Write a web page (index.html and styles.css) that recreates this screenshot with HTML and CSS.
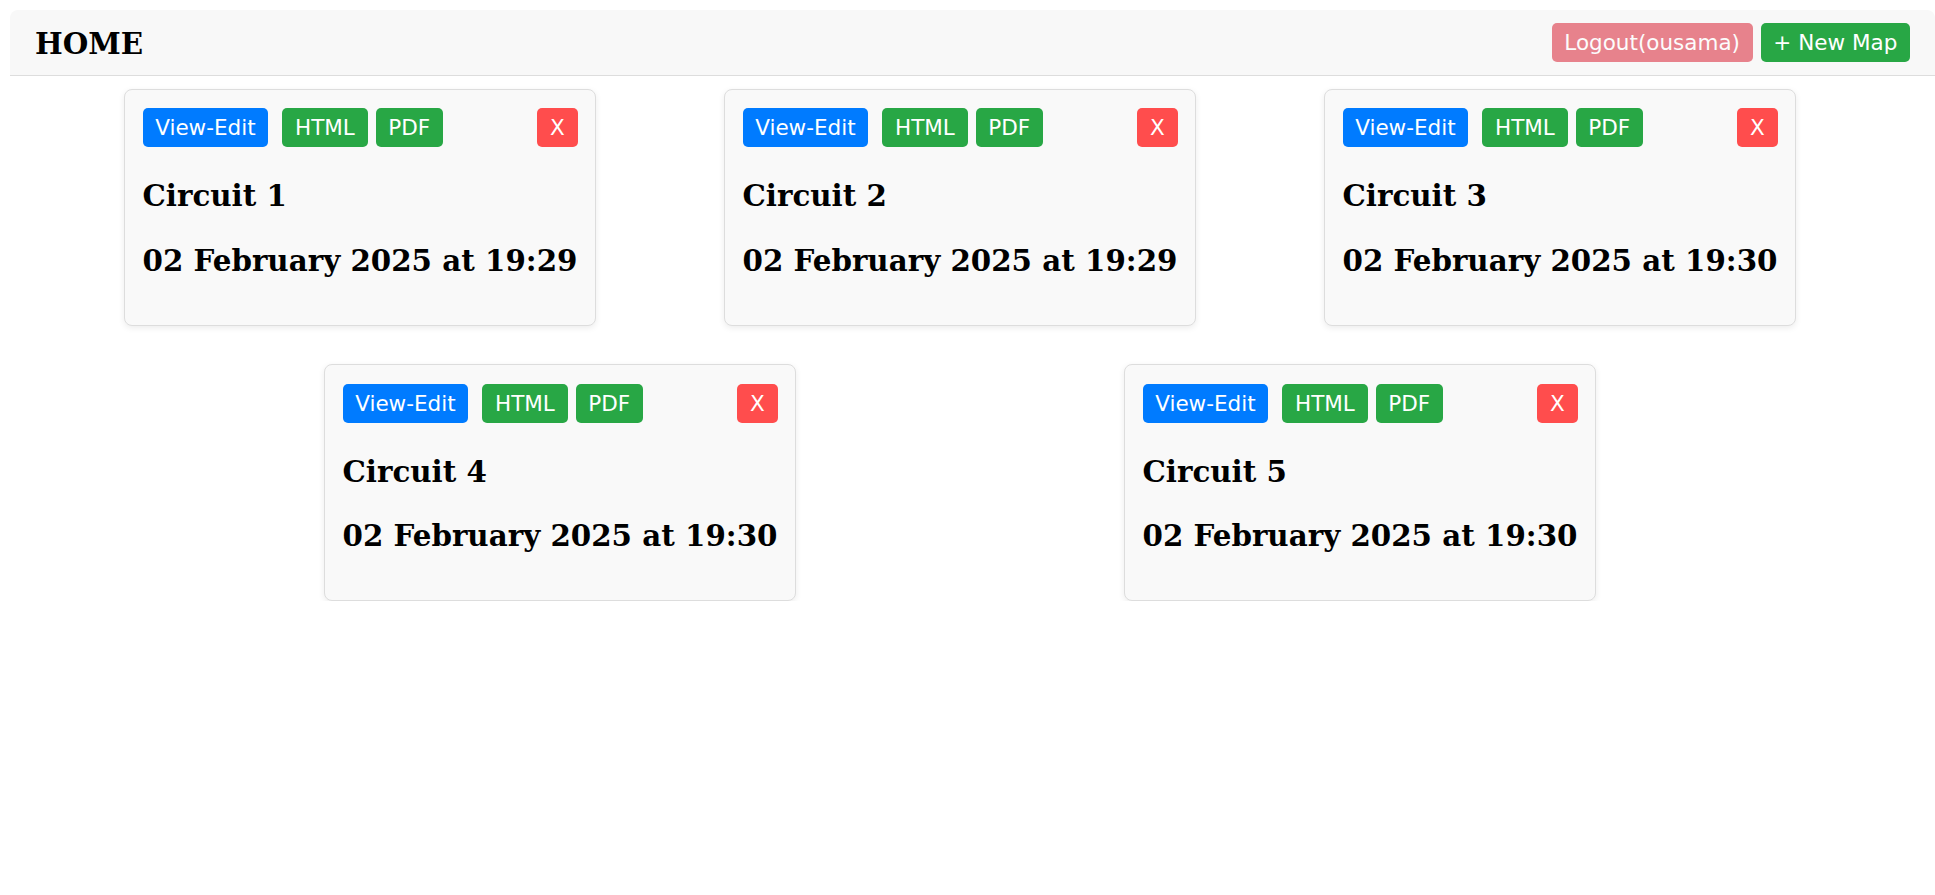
FILE: index.html
```html
<!DOCTYPE html>
<html lang="en">
<head>
<meta charset="utf-8">
<title>HOME</title>
<link rel="stylesheet" href="styles.css">
</head>
<body>
<header class="topbar">
  <h1 class="brand">HOME</h1>
  <div class="top-actions">
    <button class="btn btn-logout">Logout(ousama)</button>
    <button class="btn btn-green">+ New Map</button>
  </div>
</header>
<main class="cards">
  <div class="card">
    <div class="card-actions">
      <button class="btn btn-blue">View-Edit</button>
      <button class="btn btn-green btn-html">HTML</button>
      <button class="btn btn-green">PDF</button>
      <button class="btn btn-red btn-x">X</button>
    </div>
    <h2 class="card-title">Circuit 1</h2>
    <h2 class="card-date">02 February 2025 at 19:29</h2>
  </div>
  <div class="card">
    <div class="card-actions">
      <button class="btn btn-blue">View-Edit</button>
      <button class="btn btn-green btn-html">HTML</button>
      <button class="btn btn-green">PDF</button>
      <button class="btn btn-red btn-x">X</button>
    </div>
    <h2 class="card-title">Circuit 2</h2>
    <h2 class="card-date">02 February 2025 at 19:29</h2>
  </div>
  <div class="card">
    <div class="card-actions">
      <button class="btn btn-blue">View-Edit</button>
      <button class="btn btn-green btn-html">HTML</button>
      <button class="btn btn-green">PDF</button>
      <button class="btn btn-red btn-x">X</button>
    </div>
    <h2 class="card-title">Circuit 3</h2>
    <h2 class="card-date">02 February 2025 at 19:30</h2>
  </div>
  <div class="card">
    <div class="card-actions">
      <button class="btn btn-blue">View-Edit</button>
      <button class="btn btn-green btn-html">HTML</button>
      <button class="btn btn-green">PDF</button>
      <button class="btn btn-red btn-x">X</button>
    </div>
    <h2 class="card-title">Circuit 4</h2>
    <h2 class="card-date">02 February 2025 at 19:30</h2>
  </div>
  <div class="card">
    <div class="card-actions">
      <button class="btn btn-blue">View-Edit</button>
      <button class="btn btn-green btn-html">HTML</button>
      <button class="btn btn-green">PDF</button>
      <button class="btn btn-red btn-x">X</button>
    </div>
    <h2 class="card-title">Circuit 5</h2>
    <h2 class="card-date">02 February 2025 at 19:30</h2>
  </div>
</main>
</body>
</html>
```
FILE: styles.css
```css
* {
  box-sizing: border-box;
}

body {
  margin: 0;
  background: #ffffff;
  color: #000000;
  font-family: "DejaVu Serif", serif;
}

.topbar {
  margin: 10px 0 0 10px;
  height: 66px;
  padding: 0 25px 0 25px;
  background: #f8f8f8;
  border-bottom: 1px solid #dddddd;
  border-radius: 8px 8px 0 0;
  display: flex;
  align-items: center;
  justify-content: space-between;
}

.brand {
  margin: 0;
  padding-top: 2.6px;
  font-size: 29.33px;
  font-weight: bold;
  line-height: normal;
}

.top-actions {
  display: flex;
  gap: 8px;
}

.btn {
  font-family: "DejaVu Sans", sans-serif;
  font-size: 21.5px;
  line-height: normal;
  padding: 7.2px 12.7px;
  border: none;
  border-radius: 5px;
  color: #ffffff;
  cursor: pointer;
  white-space: nowrap;
}

.btn-blue {
  background: #007bff;
}

.btn-green {
  background: #28a745;
}

.btn-red {
  background: #ff4d4d;
}

.btn-logout {
  background: #dc3545;
  opacity: 0.6;
}

.cards {
  display: flex;
  flex-wrap: wrap;
  justify-content: space-evenly;
  row-gap: 38.7px;
  padding: 12.7px 21px 0 6px;
}

.card {
  width: 472px;
  margin: 0 10px;
  padding: 18.3px 17.5px 18px 17.5px;
  background: #f9f9f9;
  border: 1px solid #dddddd;
  border-radius: 8px;
  box-shadow: 0 2px 6px rgba(0, 0, 0, 0.08);
}

.card-actions {
  display: flex;
  align-items: center;
  gap: 8px;
}

.btn-html {
  margin-left: 6px;
}

.btn-x {
  margin-left: auto;
}

.card-title,
.card-date {
  font-size: 29.33px;
  font-weight: bold;
  line-height: normal;
  white-space: nowrap;
}

.card-title {
  margin: 31px 0 0 0;
}

.card-date {
  margin: 29.3px 0 29px 0;
}
```
